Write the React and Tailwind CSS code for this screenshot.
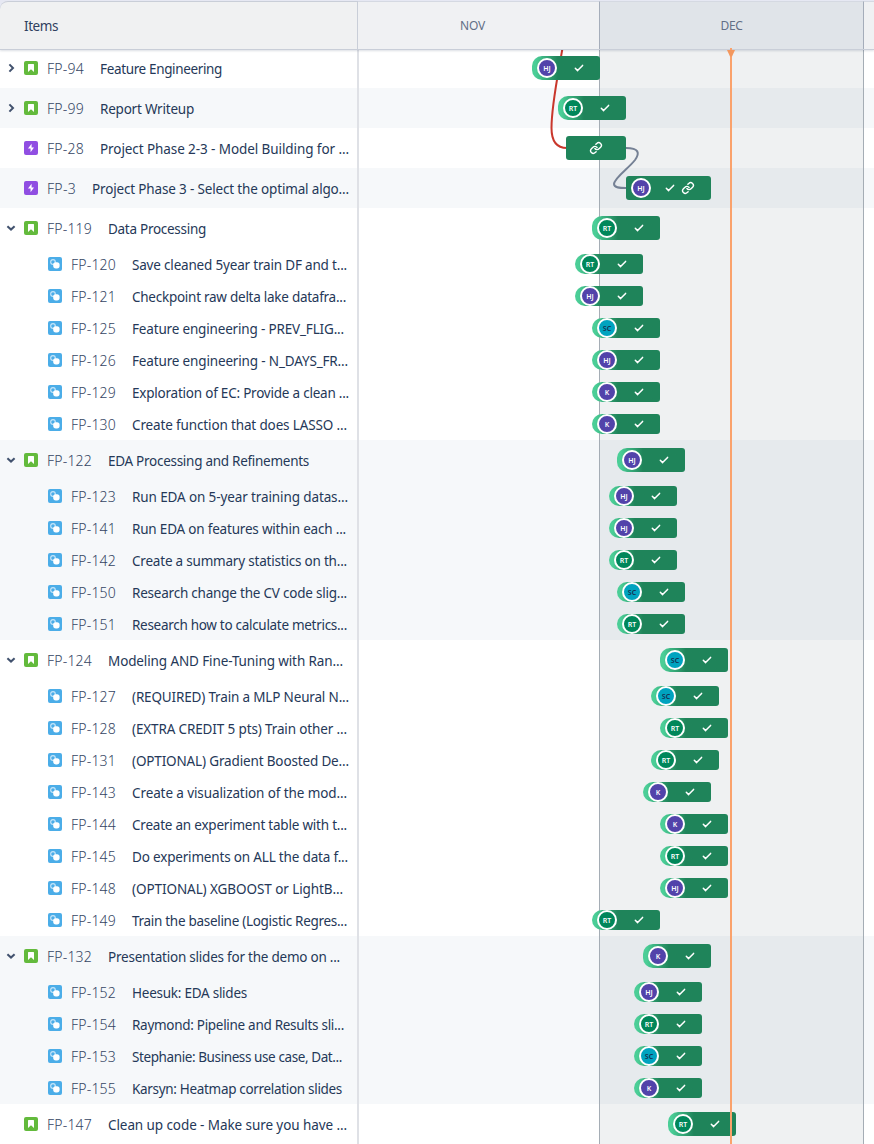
import { useLayoutEffect, useRef } from "react";

const GROUPS = [
  [["FP-94", "Feature Engineering", 222, 532, "HJ", "closed"]],
  [["FP-99", "Report Writeup", 194, 558, "RT", "closed"]],
  [["FP-28", "Project Phase 2-3 - Model Building for ...", 349, 566, null, "epic"]],
  [["FP-3", "Project Phase 3 - Select the optimal algo...", 349, 626, "HJ", "epic"]],
  [
    ["FP-119", "Data Processing", 206, 592, "RT", "open"],
    ["FP-120", "Save cleaned 5year train DF and t...", 347, 575, "RT"],
    ["FP-121", "Checkpoint raw delta lake datafra...", 346, 575, "HJ"],
    ["FP-125", "Feature engineering - PREV_FLIG...", 344, 592, "SC"],
    ["FP-126", "Feature engineering - N_DAYS_FR...", 348, 592, "HJ"],
    ["FP-129", "Exploration of EC: Provide a clean ...", 349, 592, "K"],
    ["FP-130", "Create function that does LASSO ...", 347, 592, "K"],
  ],
  [
    ["FP-122", "EDA Processing and Refinements", 309, 617, "HJ", "open"],
    ["FP-123", "Run EDA on 5-year training datas...", 348, 609, "HJ"],
    ["FP-141", "Run EDA on features within each ...", 346, 609, "HJ"],
    ["FP-142", "Create a summary statistics on th...", 347, 609, "RT"],
    ["FP-150", "Research change the CV code slig...", 347, 617, "SC"],
    ["FP-151", "Research how to calculate metrics...", 347, 617, "RT"],
  ],
  [
    ["FP-124", "Modeling AND Fine-Tuning with Ran...", 343, 660, "SC", "open"],
    ["FP-127", "(REQUIRED) Train a MLP Neural N...", 349, 651, "SC"],
    ["FP-128", "(EXTRA CREDIT 5 pts) Train other ...", 347, 660, "RT"],
    ["FP-131", "(OPTIONAL) Gradient Boosted De...", 349, 651, "RT"],
    ["FP-143", "Create a visualization of the mod...", 347, 643, "K"],
    ["FP-144", "Create an experiment table with t...", 347, 660, "K"],
    ["FP-145", "Do experiments on ALL the data f...", 348, 660, "RT"],
    ["FP-148", "(OPTIONAL) XGBOOST or LightB...", 343, 660, "HJ"],
    ["FP-149", "Train the baseline (Logistic Regres...", 347, 592, "RT"],
  ],
  [
    ["FP-132", "Presentation slides for the demo on ...", 340, 643, "K", "open"],
    ["FP-152", "Heesuk: EDA slides", 247, 634, "HJ"],
    ["FP-154", "Raymond: Pipeline and Results sli...", 344, 634, "RT"],
    ["FP-153", "Stephanie: Business use case, Dat...", 342, 634, "SC"],
    ["FP-155", "Karsyn: Heatmap correlation slides", 342, 634, "K"],
  ],
  [["FP-147", "Clean up code - Make sure you have ...", 347, 668, "RT", "leaf"]],
];

// Spreads a label's letters evenly over the given width.
function Label({ text, width, className }) {
  const ref = useRef(null);
  useLayoutEffect(() => {
    const el = ref.current;
    el.style.letterSpacing = "0px";
    const natural = el.getBoundingClientRect().width;
    el.style.letterSpacing = `${(width - natural) / text.length}px`;
  }, [text, width]);
  return (
    <span ref={ref} className={`shrink-0 whitespace-nowrap ${className}`}>
      {text}
    </span>
  );
}

function StoryIcon() {
  return (
    <svg className="size-3.5 shrink-0" viewBox="0 0 14 14">
      <rect width="14" height="14" rx="2" fill="#63ba3c" />
      <path d="M4 3.6a.6.6 0 0 1 .6-.6h4.8a.6.6 0 0 1 .6.6V11L7 8.2 4 11z" fill="#fff" />
    </svg>
  );
}

function EpicIcon() {
  return (
    <svg className="size-3.5 shrink-0" viewBox="0 0 14 14">
      <rect width="14" height="14" rx="2" fill="#904ee2" />
      <path d="M7.6 2.8 4 7.5h2.6v3.7L10 6.5H7.6z" fill="#fff" />
    </svg>
  );
}

function SubtaskIcon() {
  return (
    <svg className="size-3.5 shrink-0" viewBox="0 0 14 14">
      <rect width="14" height="14" rx="2" fill="#4bade8" />
      <circle cx="5" cy="5" r="2.3" fill="none" stroke="#c4e4f8" strokeWidth="1.2" />
      <rect x="5.2" y="5.2" width="6.4" height="6.2" rx="2.6" fill="#fff" />
    </svg>
  );
}

function Chevron({ open }) {
  return (
    <svg className="size-3 shrink-0" viewBox="0 0 12 12" fill="none" stroke="#42526e" strokeWidth="2">
      <path d={open ? "M2.4 4.2 6 7.6 9.6 4.2" : "M4.4 2.4 8 6 4.4 9.6"} />
    </svg>
  );
}

function Check() {
  return (
    <svg className="h-3 w-3 shrink-0" viewBox="0 0 12 12" fill="none" stroke="#fff" strokeWidth="1.5" strokeLinecap="round" strokeLinejoin="round">
      <path d="M2.3 6.3 4.6 8.6 9.6 3.4" />
    </svg>
  );
}

function Link() {
  return (
    <svg className="size-3.5 shrink-0" viewBox="-1 -1 26 26" fill="none" stroke="#fff" strokeWidth="2.6" strokeLinecap="round">
      <path d="M10 13a5 5 0 0 0 7.54.54l3-3a5 5 0 0 0-7.07-7.07l-1.72 1.71" />
      <path d="M14 11a5 5 0 0 0-7.54-.54l-3 3a5 5 0 0 0 7.07 7.07l1.71-1.71" />
    </svg>
  );
}

const AVATAR = {
  HJ: "bg-[#5243aa] text-white",
  K: "bg-[#5243aa] text-white",
  RT: "bg-[#00875a] text-white",
  SC: "bg-[#00a3bf] text-[#172b4d]",
};

function Avatar({ who }) {
  return (
    <span className={`flex size-5 shrink-0 items-center justify-center rounded-full border-2 border-white text-[7px] leading-none font-semibold ${AVATAR[who]}`}>
      {who}
    </span>
  );
}

function Bar({ id, x, who, child }) {
  const offset = { marginLeft: x - 358 };
  if (id === "FP-28") {
    return (
      <div className="flex h-6 w-15 items-center justify-center rounded-[3px] bg-[#1f845a]" style={offset}>
        <Link />
      </div>
    );
  }
  if (id === "FP-3") {
    return (
      <div className="flex h-6 w-[85px] items-center rounded-[3px] bg-[#1f845a] pl-[5px]" style={offset}>
        <Avatar who={who} />
        <span className="ml-[13px] flex items-center gap-[5px]">
          <Check />
          <Link />
        </span>
      </div>
    );
  }
  return (
    <div
      className={`flex w-17 items-center rounded-l-[10px] rounded-r-[3px] bg-linear-to-r from-[#4bce97] from-5% to-[#1f845a] to-38% pl-[5px] ${child ? "h-5" : "h-6"}`}
      style={offset}
    >
      <Avatar who={who} />
      <span className="ml-4">
        <Check />
      </span>
    </div>
  );
}

function Row({ item }) {
  const [id, title, right, x, who, kind] = item;
  const child = !kind;
  const titleX = child ? 132 : id.length === 6 ? 108 : id.length === 5 ? 100 : 92;
  const keyX = child ? 71 : 47;
  const keyWidth = id.length === 6 ? 45 : id.length === 5 ? 37 : 29;
  return (
    <div className={`flex ${child ? "h-8" : "h-10"}`}>
      <div className={`flex w-[358px] shrink-0 items-center overflow-hidden text-[13.5px] ${child ? "pl-12" : "pl-[5px]"}`}>
        {!child && (
          <span className="mr-[7px] flex w-3 shrink-0">
            {(kind === "open" || kind === "closed") && <Chevron open={kind === "open"} />}
          </span>
        )}
        {child ? <SubtaskIcon /> : kind === "epic" ? <EpicIcon /> : <StoryIcon />}
        <span className="flex items-baseline pt-0.5 pl-[9px] leading-5">
          <span className="shrink-0" style={{ width: titleX - keyX }}>
            <Label text={id} width={keyWidth} className="text-[14px] font-light text-[#344563]" />
          </span>
          <Label text={title} width={right - titleX} className="text-[#253858]" />
        </span>
      </div>
      <div className="flex flex-1 items-center">
        <Bar id={id} x={x} who={who} child={child} />
      </div>
    </div>
  );
}

export default function App() {
  return (
    <div className="relative flex h-[1144px] w-[874px] flex-col overflow-hidden bg-white font-['Noto_Sans',sans-serif]">
      <header className="relative z-20 flex h-[50px] shrink-0 border-b border-[#c9ced8] bg-[#e6e8f3] pt-px shadow-[0_1px_2px_rgba(9,30,66,0.14)]">
        <div className="flex w-[358px] items-center rounded-tl-lg border-t border-r border-[#c9ced8] bg-[#f0f1f2] pt-0.5 pl-6 text-[13.5px] text-[#2f4060]">
          <Label text="Items" width={34} className="" />
        </div>
        <div className="flex w-[241px] items-center justify-center border-t border-[#d5d9e2] bg-[#f0f1f3] pr-3 text-[12px] text-[#626f86]">
          <Label text="NOV" width={25} className="" />
        </div>
        <div className="flex w-[265px] items-center justify-center border-x border-t border-x-[#a5adba] border-t-[#d5d9e2] bg-[#e0e4e9] text-[12px] text-[#626f86]">
          <Label text="DEC" width={22} className="" />
        </div>
        <div className="flex-1 border-t border-[#d5d9e2] bg-[#f0f1f3]" />
      </header>
      <main className="relative -mt-0.5 flex flex-col">
        <div className="pointer-events-none absolute inset-y-0 left-[599px] z-0 w-[265px] border-x border-[#a5adb5] bg-[#1c3340]/7" />
        <svg className="pointer-events-none absolute top-0 left-[358px] z-0 h-[200px] w-[516px]" viewBox="358 48 516 200" fill="none" strokeWidth="2">
          <path d="M562.5 48C558 75 551.5 105 551.5 128 551.5 142 557 148 567 148" stroke="#c9372c" />
          <path d="M626 148C639 148 640 153 635 160 629 168 614 178 614 184 614 188 620 188 626 188" stroke="#758195" />
        </svg>
        {GROUPS.map((items, i) => (
          <section key={items[0][0]} className={i % 2 ? "bg-[#f6f8fa]" : "bg-white"}>
            <div className="relative z-10">
              {items.map((item) => (
                <Row key={item[0]} item={item} />
              ))}
            </div>
          </section>
        ))}
        <div className="pointer-events-none absolute inset-y-0 left-[357px] z-10 w-0.5 bg-[#dfe1e6]" />
        <div className="pointer-events-none absolute inset-y-0 left-[730px] z-20 w-0.5 bg-[#faa26c]" />
        <svg className="pointer-events-none absolute top-0.5 left-[727px] z-20 h-[7px] w-2" viewBox="0 0 8 7">
          <path d="M0 0h8L5 6.5H3z" fill="#f3985f" />
        </svg>
      </main>
    </div>
  );
}
